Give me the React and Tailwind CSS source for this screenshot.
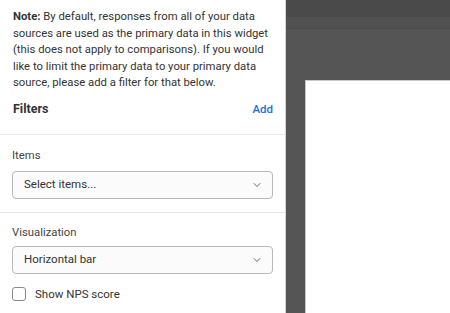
import { ChevronDown } from "lucide-react";

const font = { fontFamily: 'Roboto, "Noto Sans", sans-serif' };

const Select = ({ value }) => (
    <div className="flex items-center justify-between h-[28px] rounded-[4px] border border-[#b9b9b9] bg-[#fbfbfb] pl-[11px] pr-[9px]">
        <span className="text-[11.5px] text-[#333]">{value}</span>
        <ChevronDown size={12} strokeWidth={1.8} className="text-[#555]" />
    </div>
);

const App = () => {
    return (
        <div className="flex w-[450px] h-[313px] overflow-hidden bg-white" style={font}>
            {/* Left settings panel */}
            <div className="w-[286px] shrink-0 flex flex-col border-r border-[#d6d6d6] bg-white">
                <p className="px-[13px] pt-[9px] text-[11.3px] leading-[16.5px] text-[#333]">
                    <strong className="font-bold">Note:</strong> By default, responses from all of your data<br />
                    sources are used as the primary data in this widget<br />
                    (this does not apply to comparisons). If you would<br />
                    like to limit the primary data to your primary data<br />
                    source, please add a filter for that below.
                </p>

                <div className="flex items-center justify-between px-[13px] pr-[12px] mt-[9px] pb-[16px] border-b border-[#e6e6e6]">
                    <h3 className="text-[12.5px] leading-[16px] font-bold text-[#333]">Filters</h3>
                    <button className="text-[11.5px] font-medium text-[#1a73d9]">Add</button>
                </div>

                <div className="px-[12px] pt-[13px] pb-[13px] border-b border-[#e6e6e6]">
                    <div className="text-[11.3px] leading-[15px] text-[#444] mb-[8px]">Items</div>
                    <Select value="Select items..." />
                </div>

                <div className="px-[12px] pt-[12px]">
                    <div className="text-[11.3px] leading-[15px] text-[#444] mb-[6px]">Visualization</div>
                    <Select value="Horizontal bar" />
                    <label className="flex items-center gap-[9px] mt-[12px]">
                        <span className="w-[14px] h-[14px] rounded-[3px] border border-[#8a8a8a] bg-white" />
                        <span className="text-[11.5px] text-[#333]">Show NPS score</span>
                    </label>
                </div>
            </div>

            {/* Dark editor canvas */}
            <div className="flex-1 flex flex-col bg-[#555555]">
                <div className="h-[17px] bg-[#4a4a4a]" />
                <div className="h-[12px] bg-[#515151] border-b border-[#4b4b4b]" />
                <div className="flex-1 flex flex-col pl-[19px] pt-[51px]">
                    <div className="flex-1 bg-white border-l border-t border-[#c9c9c9]" />
                </div>
            </div>
        </div>
    );
};

export default App;
